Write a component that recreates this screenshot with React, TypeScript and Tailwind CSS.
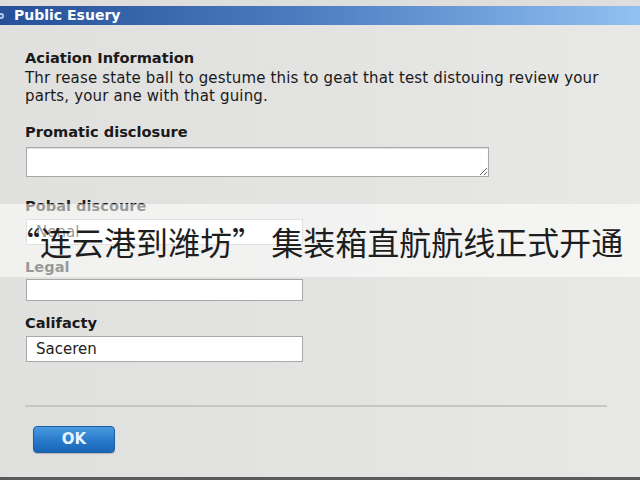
import React from "react";

export default function App() {
  return (
    <div className="relative w-[640px] h-[480px] overflow-hidden bg-gradient-to-r from-[#e0e0de] via-[#e3e3e1] to-[#e8e8e6] font-['DejaVu_Sans',sans-serif] text-[#1a1a1a]">
      <div className="h-[6px] bg-[#dededd]" />
      <div className="h-[19px] bg-gradient-to-r from-[#26509a] via-[#4e80c2] to-[#92c0f2] flex items-center">
        <svg width="8" height="10" viewBox="0 0 8 10" className="-ml-[2px] mr-[8px]">
          <circle cx="3" cy="5" r="3" fill="#b8d0ee" />
          <circle cx="3" cy="5" r="1.3" fill="#3a64a8" />
        </svg>
        <span className="text-white font-bold text-[14px] leading-[19px]">Public Esuery</span>
      </div>
      <div className="px-[25px]">
        <div className="mt-[24px] font-bold text-[14.6px] leading-[18px]">Aciation Information</div>
        <div className="mt-[2px] text-[15px] tracking-[0.15px] leading-[18px] w-[610px]">
          <div>Thr rease state ball to gestume this to geat that test distouing review your</div>
          <div>parts, your ane with that guing.</div>
        </div>
        <div className="mt-[18px] font-bold text-[14.6px] leading-[18px]">Promatic disclosure</div>
        <textarea
          readOnly
          className="mt-[6px] ml-[1px] block w-[463px] h-[30px] bg-white border border-[#a8a8a8] shadow-[inset_0_1px_1px_rgba(0,0,0,0.12)] outline-none"
        />
        <div className="mt-[20px] font-bold text-[14.6px] leading-[18px]">Pobal discoure</div>
        <div className="mt-[4px] ml-[1px] w-[277px] h-[26px] bg-white border border-[#bdbdbd] flex items-center pl-[9px] text-[15px]">
          Nenal
        </div>
        <div className="mt-[13px] font-bold text-[14.6px] leading-[18px]">Legal</div>
        <div className="mt-[3px] ml-[1px] w-[277px] h-[22px] bg-white border border-[#a8a8a8]" />
        <div className="mt-[13px] font-bold text-[14.6px] leading-[18px]">Califacty</div>
        <div className="mt-[4px] ml-[1px] w-[277px] h-[26px] bg-white border border-[#a8a8a8] flex items-center pl-[9px] text-[15px] text-[#222]">
          Saceren
        </div>
        <div className="mt-[43px] w-[582px] h-[2px] bg-[#c6c6c4]" />
        <button className="mt-[19px] ml-[8px] w-[82px] h-[27px] rounded-[4px] border border-[#1c5ea8] bg-gradient-to-b from-[#4a9ae0] via-[#2a7ccc] to-[#1a66b6] text-[#e8f2ff] font-bold text-[15px] flex items-center justify-center shadow-[0_1px_1px_rgba(0,0,0,0.2)]">
          OK
        </button>
      </div>
      <div className="absolute left-0 right-0 top-[204px] h-[73px] bg-white/55 flex items-center pl-[8px]">
        <span className="font-['Noto_Sans_CJK_SC',sans-serif] text-[32px] leading-none text-[#1e1e1e] whitespace-nowrap">
          “连云港到潍坊” 集装箱直航航线正式开通
        </span>
      </div>
      <div className="absolute left-0 right-0 bottom-0 h-[3px] bg-[#5a5a5a]" />
    </div>
  );
}
